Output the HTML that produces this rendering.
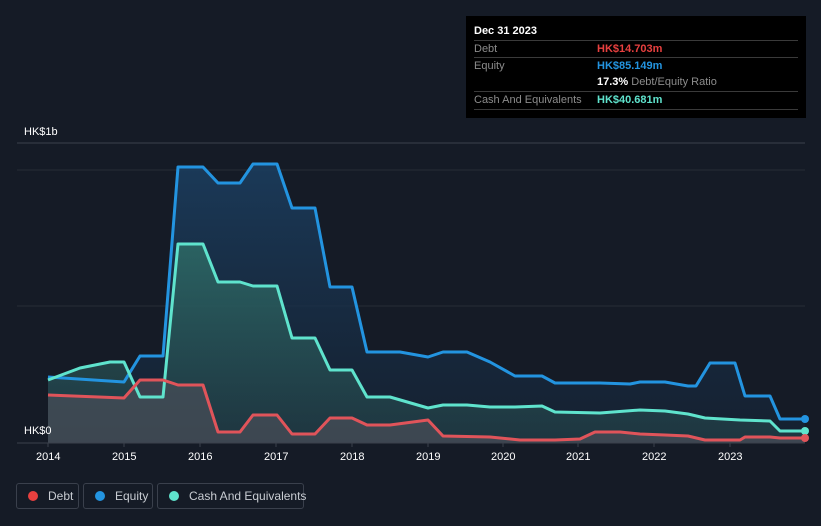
<!DOCTYPE html><html><head><style>
body{margin:0;background:#151b26;width:821px;height:526px;overflow:hidden;font-family:"Liberation Sans",sans-serif;position:relative}
.tt{position:absolute;left:466px;top:16px;width:340px;height:102px;background:#000;color:#fff;font-size:11px}
.tt .r{position:absolute;left:8px;right:8px;border-top:1px solid #3a3a3a;height:17px;line-height:17px;color:#8c8c8c}
.tt .v{position:absolute;left:123px;font-weight:bold}
.lg{position:absolute;top:483px;height:26px;border:1px solid #3a404c;border-radius:3px;color:#c8ccd2;font-size:12px;line-height:24px;box-sizing:border-box;white-space:nowrap}
.dot{display:inline-block;width:10px;height:10px;border-radius:50%;margin:0 10px 0 11px;vertical-align:-1px}
.ax{position:absolute;color:#fff;font-size:11px}
</style></head><body>
<svg width="821" height="526" style="position:absolute;left:0;top:0">
<defs>
<linearGradient id="ge" x1="0" y1="0" x2="0" y2="1"><stop offset="0" stop-color="#1b3d5e" stop-opacity=".9"/><stop offset="1" stop-color="#152437" stop-opacity=".6"/></linearGradient>
<linearGradient id="gc" x1="0" y1="0" x2="0" y2="1"><stop offset="0" stop-color="#2f6f68" stop-opacity=".8"/><stop offset="1" stop-color="#24434a" stop-opacity=".6"/></linearGradient>
</defs>
<line x1="17" y1="143" x2="805" y2="143" stroke="#3a404c"/>
<line x1="17" y1="170" x2="805" y2="170" stroke="#262c37"/>
<line x1="17" y1="306" x2="805" y2="306" stroke="#262c37"/>
<polygon fill="url(#ge)" points="48,377 124,382 140,356 163,356 178,167 203,167 218,183 240,183 253,164 277,164 292,208 315,208 330,287 352,287 367,352 400,352 428,357 443,352 467,352 490,362 515,376 542,376 555,383 600,383 630,384 640,382 665,382 688,386 696,386 710,363 735,363 745,396 770,396 780,419 805,419 805,443 48,443"/>
<polygon fill="url(#gc)" points="48,380 80,368 110,362 124,362 140,397 163,397 178,244 203,244 218,282 240,282 253,286 277,286 292,338 315,338 330,370 352,370 367,397 390,397 428,408 443,405 467,405 490,407 515,407 542,406 555,412 600,413 640,410 665,411 688,414 705,418 740,420 770,421 780,431 805,431 805,443 48,443"/>
<polygon fill="#4a4e58" fill-opacity=".7" points="48,395 124,398 140,380 163,380 178,385 203,385 218,432 240,432 253,415 277,415 292,434 315,434 330,418 352,418 367,425 390,425 428,420 443,436 490,437 520,440 555,440 580,439 595,432 620,432 640,434 665,435 688,436 705,440 740,440 745,437 770,437 780,438 805,438 805,443 48,443"/>
<g fill="none" stroke-width="3" stroke-linejoin="round">
<polyline stroke="#2394e0" points="48,377 124,382 140,356 163,356 178,167 203,167 218,183 240,183 253,164 277,164 292,208 315,208 330,287 352,287 367,352 400,352 428,357 443,352 467,352 490,362 515,376 542,376 555,383 600,383 630,384 640,382 665,382 688,386 696,386 710,363 735,363 745,396 770,396 780,419 805,419"/>
<polyline stroke="#5fe3cd" points="48,380 80,368 110,362 124,362 140,397 163,397 178,244 203,244 218,282 240,282 253,286 277,286 292,338 315,338 330,370 352,370 367,397 390,397 428,408 443,405 467,405 490,407 515,407 542,406 555,412 600,413 640,410 665,411 688,414 705,418 740,420 770,421 780,431 805,431"/>
<polyline stroke="#e0545a" points="48,395 124,398 140,380 163,380 178,385 203,385 218,432 240,432 253,415 277,415 292,434 315,434 330,418 352,418 367,425 390,425 428,420 443,436 490,437 520,440 555,440 580,439 595,432 620,432 640,434 665,435 688,436 705,440 740,440 745,437 770,437 780,438 805,438"/>
</g>
<line x1="17" y1="443" x2="805" y2="443" stroke="#3a404c"/>
<g stroke="#3a404c"><line x1="48" y1="443" x2="48" y2="447"/><line x1="124" y1="443" x2="124" y2="447"/><line x1="200" y1="443" x2="200" y2="447"/><line x1="276" y1="443" x2="276" y2="447"/><line x1="352" y1="443" x2="352" y2="447"/><line x1="428" y1="443" x2="428" y2="447"/><line x1="503" y1="443" x2="503" y2="447"/><line x1="578" y1="443" x2="578" y2="447"/><line x1="654" y1="443" x2="654" y2="447"/><line x1="730" y1="443" x2="730" y2="447"/></g>
<circle cx="805" cy="419" r="4" fill="#2394e0"/><circle cx="805" cy="431" r="4" fill="#5fe3cd"/><circle cx="805" cy="438" r="4" fill="#e0545a"/>
</svg>
<div class="ax" style="left:24px;top:126px">HK$1b</div>
<div class="ax" style="left:24px;top:425px">HK$0</div>
<div class="ax" style="left:36px;top:451px">2014</div><div class="ax" style="left:112px;top:451px">2015</div><div class="ax" style="left:188px;top:451px">2016</div><div class="ax" style="left:264px;top:451px">2017</div><div class="ax" style="left:340px;top:451px">2018</div><div class="ax" style="left:416px;top:451px">2019</div><div class="ax" style="left:491px;top:451px">2020</div><div class="ax" style="left:566px;top:451px">2021</div><div class="ax" style="left:642px;top:451px">2022</div><div class="ax" style="left:718px;top:451px">2023</div>
<div class="tt">
<div style="position:absolute;left:8px;top:9px;font-size:11px;font-weight:bold">Dec 31 2023</div>
<div class="r" style="top:24px">Debt<span class="v" style="color:#e8403f">HK$14.703m</span></div>
<div class="r" style="top:41px">Equity<span class="v" style="color:#2394e0">HK$85.149m</span></div>
<div class="r" style="top:58px;border-top:none"><span class="v" style="color:#fff">17.3% <span style="color:#8c8c8c;font-weight:normal">Debt/Equity Ratio</span></span></div>
<div class="r" style="top:75px">Cash And Equivalents<span class="v" style="color:#5fe3cd">HK$40.681m</span></div>
<div style="position:absolute;left:8px;right:8px;top:93px;border-top:1px solid #3a3a3a"></div>
</div>
<div class="lg" style="left:16px;width:63px"><span class="dot" style="background:#e8403f"></span>Debt</div>
<div class="lg" style="left:83px;width:70px"><span class="dot" style="background:#2394e0"></span>Equity</div>
<div class="lg" style="left:157px;width:147px"><span class="dot" style="background:#5fe3cd"></span>Cash And Equivalents</div>
</body></html>
